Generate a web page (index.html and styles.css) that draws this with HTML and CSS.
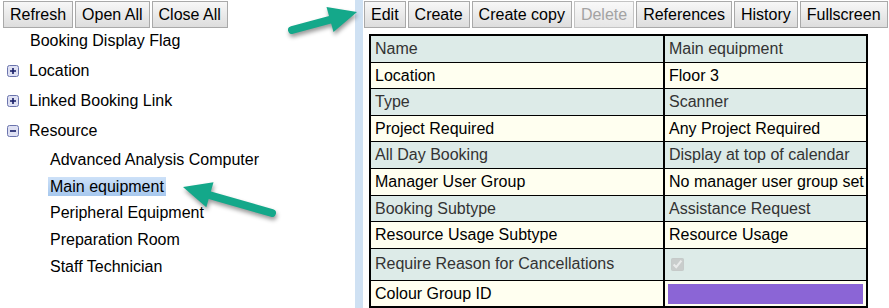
FILE: index.html
```html
<!DOCTYPE html>
<html>
<head>
<meta charset="utf-8">
<link rel="stylesheet" href="styles.css">
</head>
<body>
<div class="app">
  <div class="left">
    <div class="toolbar">
      <button class="btn">Refresh</button>
      <button class="btn">Open All</button>
      <button class="btn">Close All</button>
    </div>
    <ul class="tree">
      <li class="node"><span class="label leaf">Booking Display Flag</span></li>
      <li class="node">
        <span class="label"><svg class="tog" width="12" height="12" viewBox="0 0 12 12"><rect x="0.5" y="0.5" width="11" height="11" rx="2" fill="#dfe1f3" stroke="#6b74ad"/><path d="M3 6h6M6 3v6" stroke="#141c66" stroke-width="1.6"/></svg>Location</span>
      </li>
      <li class="node">
        <span class="label"><svg class="tog" width="12" height="12" viewBox="0 0 12 12"><rect x="0.5" y="0.5" width="11" height="11" rx="2" fill="#dfe1f3" stroke="#6b74ad"/><path d="M3 6h6M6 3v6" stroke="#141c66" stroke-width="1.6"/></svg>Linked Booking Link</span>
      </li>
      <li class="node open">
        <span class="label"><svg class="tog" width="12" height="12" viewBox="0 0 12 12"><rect x="0.5" y="0.5" width="11" height="11" rx="2" fill="#dfe1f3" stroke="#6b74ad"/><path d="M3 6h6" stroke="#141c66" stroke-width="1.6"/></svg>Resource</span>
        <ul class="children">
          <li><span class="item">Advanced Analysis Computer</span></li>
          <li><span class="item selected">Main equipment</span></li>
          <li><span class="item">Peripheral Equipment</span></li>
          <li><span class="item">Preparation Room</span></li>
          <li><span class="item">Staff Technician</span></li>
        </ul>
      </li>
    </ul>
  </div>
  <div class="splitter"></div>
  <div class="right">
    <div class="toolbar">
      <button class="btn">Edit</button>
      <button class="btn">Create</button>
      <button class="btn">Create copy</button>
      <button class="btn" disabled>Delete</button>
      <button class="btn">References</button>
      <button class="btn">History</button>
      <button class="btn">Fullscreen</button>
    </div>
    <table class="props">
      <tr class="alt"><td class="key">Name</td><td>Main equipment</td></tr>
      <tr><td class="key">Location</td><td>Floor 3</td></tr>
      <tr class="alt"><td class="key">Type</td><td>Scanner</td></tr>
      <tr><td class="key">Project Required</td><td>Any Project Required</td></tr>
      <tr class="alt"><td class="key">All Day Booking</td><td>Display at top of calendar</td></tr>
      <tr><td class="key">Manager User Group</td><td>No manager user group set</td></tr>
      <tr class="alt"><td class="key">Booking Subtype</td><td>Assistance Request</td></tr>
      <tr><td class="key">Resource Usage Subtype</td><td>Resource Usage</td></tr>
      <tr class="alt check-row"><td class="key">Require Reason for Cancellations</td><td><input class="chk" type="checkbox" checked disabled></td></tr>
      <tr><td class="key">Colour Group ID</td><td class="swatch-cell"><div class="swatch"></div></td></tr>
    </table>
  </div>
  <svg class="arrows" width="889" height="308" viewBox="0 0 889 308">
    <g class="arrow">
      <line x1="292" y1="30" x2="331" y2="19.5" stroke="#14a88a" stroke-width="8" stroke-linecap="round"/>
      <polygon points="357,12 333.5,32 326.5,7" fill="#14a88a"/>
    </g>
    <g class="arrow">
      <line x1="272" y1="213" x2="209" y2="195" stroke="#14a88a" stroke-width="8" stroke-linecap="round"/>
      <polygon points="183,187 213.5,182.3 206.3,207.3" fill="#14a88a"/>
    </g>
  </svg>
</div>
</body>
</html>
```

FILE: styles.css
```css
html, body {
  margin: 0;
  padding: 0;
  background: #fff;
}
body {
  font-family: "Liberation Sans", Arial, sans-serif;
  font-size: 16px;
  color: #000;
  overflow: hidden;
}
.app {
  position: relative;
  display: flex;
  width: 889px;
  height: 308px;
}
.left {
  width: 355px;
  flex: none;
}
.splitter {
  width: 8px;
  flex: none;
  background: #cfe1f3;
}
.right {
  flex: 1;
  min-width: 0;
}
.toolbar {
  display: flex;
  gap: 2px;
  padding: 1px 0 0 3px;
  height: 27px;
}
.right .toolbar {
  padding-left: 1px;
}
.btn {
  font-family: "Liberation Sans", Arial, sans-serif;
  font-size: 16px;
  line-height: 19px;
  height: 27px;
  padding: 3px 6px;
  margin: 0;
  color: #000;
  background: linear-gradient(#f7f7f7, #dddddd);
  border: 1px solid #a9a9a9;
  border-radius: 0;
}
.btn:disabled {
  color: #a3a3a3;
  background: linear-gradient(#f9f9f9, #e6e6e6);
  border-color: #c4c4c4;
}
.tree {
  list-style: none;
  margin: 0;
  padding: 0;
}
.node > .label {
  display: flex;
  align-items: center;
  height: 26px;
  line-height: 26px;
  margin-bottom: 4px;
  padding-left: 7px;
}
.node > .label.leaf {
  padding-left: 30px;
}
.tog {
  flex: none;
  margin-right: 10px;
}
.node.open > .label {
  margin-bottom: 3px;
}
.children {
  list-style: none;
  margin: 0;
  padding: 0 0 0 48px;
}
.children li {
  line-height: 26.7px;
}
.item {
  padding: 1px 2px;
}
.item.selected {
  background: linear-gradient(#cde1f8, #a7c8ee);
}
.props {
  margin: 6px 0 0 6px;
  width: 499px;
  border-collapse: collapse;
  border: 2px solid #000;
  table-layout: fixed;
}
.props td {
  border: 1px solid #000;
  padding: 3px 4px;
  line-height: 19.6px;
  background: #fffff0;
  color: #000;
  white-space: nowrap;
  overflow: hidden;
}
.props td.key {
  width: 284px;
  border-right: 2px solid #000;
}
.props tr.alt td {
  background: #ddebe8;
  color: #333;
}
.chk {
  display: block;
  margin: 6px 2px;
  width: 13px;
  height: 13px;
}
.swatch-cell {
  padding: 2px 3px !important;
}
.swatch {
  height: 20px;
  background: #8b65d6;
}
.arrows {
  position: absolute;
  left: 0;
  top: 0;
  pointer-events: none;
}
.arrow {
  filter: drop-shadow(1px 3px 2px rgba(0, 0, 0, 0.4));
}
```
